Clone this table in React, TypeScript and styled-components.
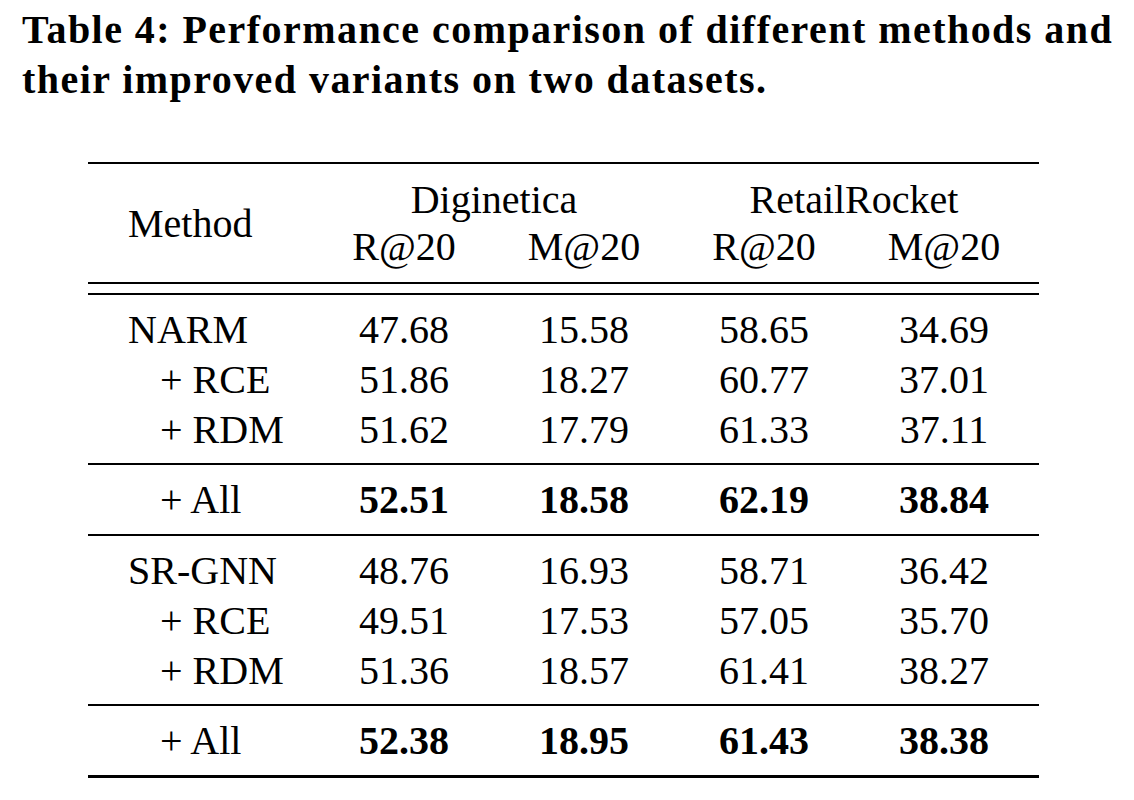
import React from "react";
import styled, { createGlobalStyle } from "styled-components";

const Global = createGlobalStyle`
  html, body { margin: 0; padding: 0; background: #fff; }
  body { font-family: "Liberation Serif", "Times New Roman", serif; color: #000; }
`;

const Page = styled.div`
  width: 1134px;
  height: 800px;
  padding-top: 5px;
  box-sizing: border-box;
`;

const Caption = styled.h1`
  margin: 0;
  padding: 0 0 0 22px;
  font-size: 40px;
  letter-spacing: 1.45px;
  line-height: 50px;
  font-weight: 700;
  white-space: nowrap;
`;

const TableWrap = styled.div`
  margin: 57px 0 0 88px;
  width: 951px;
  border-top: 2px solid #000;
  border-bottom: 3px solid #000;
  font-size: 40px;
`;

const Grid = styled.div`
  display: grid;
  grid-template-columns: 226px repeat(4, 180px);
  padding-right: 5px;
`;

const Header = styled(Grid)`
  grid-template-rows: 47px 47px;
  padding-top: 12px;
  padding-bottom: 12px;
  border-bottom: 2px solid #000;
`;

const MethodHead = styled.div`
  grid-row: 1 / 3;
  display: flex;
  align-items: center;
  padding-left: 40px;
`;

const GroupHead = styled.div`
  grid-column: span 2;
  display: flex;
  align-items: center;
  justify-content: center;
`;

const SubHead = styled.div`
  display: flex;
  align-items: center;
  justify-content: center;
`;

const Section = styled.div<{ $first?: boolean }>`
  padding: 9px 0;
  border-top: 2px solid #000;
  margin-top: ${(p) => (p.$first ? "9px" : "0")};
  border-bottom: 2px solid #000;
`;

const Row = styled(Grid)<{ $h: number }>`
  height: ${(p) => p.$h}px;
  align-items: center;
`;

const NameCell = styled.div<{ $sub?: boolean }>`
  padding-left: ${(p) => (p.$sub ? "72px" : "40px")};
  white-space: nowrap;
`;

const ValueCell = styled.div<{ $bold?: boolean }>`
  text-align: center;
  font-weight: ${(p) => (p.$bold ? 700 : 400)};
`;

type Line = { name: string; sub?: boolean; vals: string[] };

const groups: { rows: Line[]; all: string[] }[] = [
  {
    rows: [
      { name: "NARM", vals: ["47.68", "15.58", "58.65", "34.69"] },
      { name: "+ RCE", sub: true, vals: ["51.86", "18.27", "60.77", "37.01"] },
      { name: "+ RDM", sub: true, vals: ["51.62", "17.79", "61.33", "37.11"] },
    ],
    all: ["52.51", "18.58", "62.19", "38.84"],
  },
  {
    rows: [
      { name: "SR-GNN", vals: ["48.76", "16.93", "58.71", "36.42"] },
      { name: "+ RCE", sub: true, vals: ["49.51", "17.53", "57.05", "35.70"] },
      { name: "+ RDM", sub: true, vals: ["51.36", "18.57", "61.41", "38.27"] },
    ],
    all: ["52.38", "18.95", "61.43", "38.38"],
  },
];

export default function App() {
  return (
    <Page>
      <Global />
      <Caption>
        Table 4: Performance comparison of different methods and
        <br />
        their improved variants on two datasets.
      </Caption>
      <TableWrap>
        <Header>
          <MethodHead>Method</MethodHead>
          <GroupHead>Diginetica</GroupHead>
          <GroupHead>RetailRocket</GroupHead>
          <SubHead>R@20</SubHead>
          <SubHead>M@20</SubHead>
          <SubHead>R@20</SubHead>
          <SubHead>M@20</SubHead>
        </Header>
        {groups.map((g, gi) => (
          <React.Fragment key={gi}>
            <Section $first={gi === 0}>
              {g.rows.map((r) => (
                <Row $h={50} key={r.name}>
                  <NameCell $sub={r.sub}>{r.name}</NameCell>
                  {r.vals.map((v, i) => (
                    <ValueCell key={i}>{v}</ValueCell>
                  ))}
                </Row>
              ))}
            </Section>
            <Row $h={69}>
              <NameCell $sub>+ All</NameCell>
              {g.all.map((v, i) => (
                <ValueCell $bold key={i}>
                  {v}
                </ValueCell>
              ))}
            </Row>
          </React.Fragment>
        ))}
      </TableWrap>
    </Page>
  );
}
